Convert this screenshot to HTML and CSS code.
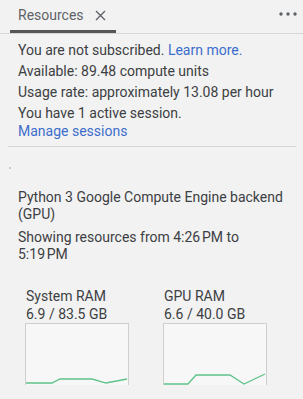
FILE: index.html
```html
<!DOCTYPE html>
<html lang="en">
<head>
<link rel="stylesheet" href="styles.css">
<meta charset="utf-8">
<title>Resources</title>
</head>
<body>
<div class="header">
  <div class="tab">
    <span class="tab-label">Resources</span>
    <svg class="close" width="11" height="11" viewBox="0 0 11 11"><path d="M1 1L10 10M10 1L1 10" stroke="#5f6368" stroke-width="1.4"/></svg>
  </div>
  <svg class="more" width="18" height="4" viewBox="0 0 18 4"><circle cx="2" cy="2" r="1.7" fill="#5f6368"/><circle cx="9" cy="2" r="1.7" fill="#5f6368"/><circle cx="16" cy="2" r="1.7" fill="#5f6368"/></svg>
</div>

<div class="account">
  <p>You are not subscribed. <a href="#">Learn more.</a></p>
  <p>Available: 89.48 compute units</p>
  <p>Usage rate: approximately 13.08 per hour</p>
  <p>You have 1 active session.<br><a href="#">Manage sessions</a></p>
</div>
<hr class="divider">
<div class="spinner"></div>

<div class="backend">
  <p>Python 3 Google Compute Engine backend (GPU)</p>
  <p>Showing resources from 4:26&#8239;PM to 5:19&#8239;PM</p>
</div>

<div class="charts">
  <div class="chart">
    <div class="chart-title">System RAM</div>
    <div class="chart-value">6.9 / 83.5 GB</div>
    <svg class="graph" width="102" height="61" viewBox="0 0 102 61"><polyline points="0,59 26,59 34,55 66,55 80,59 101,55" fill="none" stroke="#5fc389" stroke-width="1.3"/></svg>
  </div>
  <div class="chart">
    <div class="chart-title">GPU RAM</div>
    <div class="chart-value">6.6 / 40.0 GB</div>
    <svg class="graph" width="102" height="61" viewBox="0 0 102 61"><polyline points="0,60 24,60 32,51 66,51 80,60 101,50" fill="none" stroke="#5fc389" stroke-width="1.3"/></svg>
  </div>
</div>
</body>
</html>
```
FILE: styles.css
```css
html * {
  font-family: Roboto, "Liberation Sans", sans-serif;
}

body {
  margin: 0;
  padding: 0;
  background-color: #f2f2f2;
  color: #3c4043;
  font-size: 14px;
}

.header {
  display: flex;
  align-items: center;
  justify-content: space-between;
  height: 33px;
  border-bottom: 1px solid #d6d6d6;
}

.tab {
  display: flex;
  align-items: center;
  gap: 11px;
  height: 30px;
  margin-left: 10px;
  margin-top: 0;
  padding: 0 10px 0 8px;
  border-bottom: 3px solid #555;
  box-sizing: content-box;
}

.tab-label {
  color: #5f6368;
  font-size: 14px;
}

.more {
  margin-right: 6px;
  margin-top: -5px;
}

.account {
  padding: 7px 18px 0 18px;
}

.account p,
.backend p {
  margin: 0 0 3px 0;
  line-height: 18px;
}

a {
  color: #3d6dcc;
  text-decoration: none;
}

.divider {
  border: none;
  border-top: 1px solid #d6d6d6;
  margin: 6px 7px 0 8px;
}

.spinner {
  width: 2px;
  height: 2px;
  margin: 20px 0 0 9px;
  background-color: #c8c8c8;
}

.backend {
  padding: 20px 18px 0 18px;
}

.backend p {
  line-height: 17px;
  margin-bottom: 6px;
}

.charts {
  display: flex;
  gap: 36px;
  padding: 18px 0 0 26px;
}

.chart-title,
.chart-value {
  line-height: 18px;
}

.graph {
  display: block;
  margin-top: 1px;
  background-color: #f7f7f7;
  outline: 1px solid #cfcfcf;
}
```
